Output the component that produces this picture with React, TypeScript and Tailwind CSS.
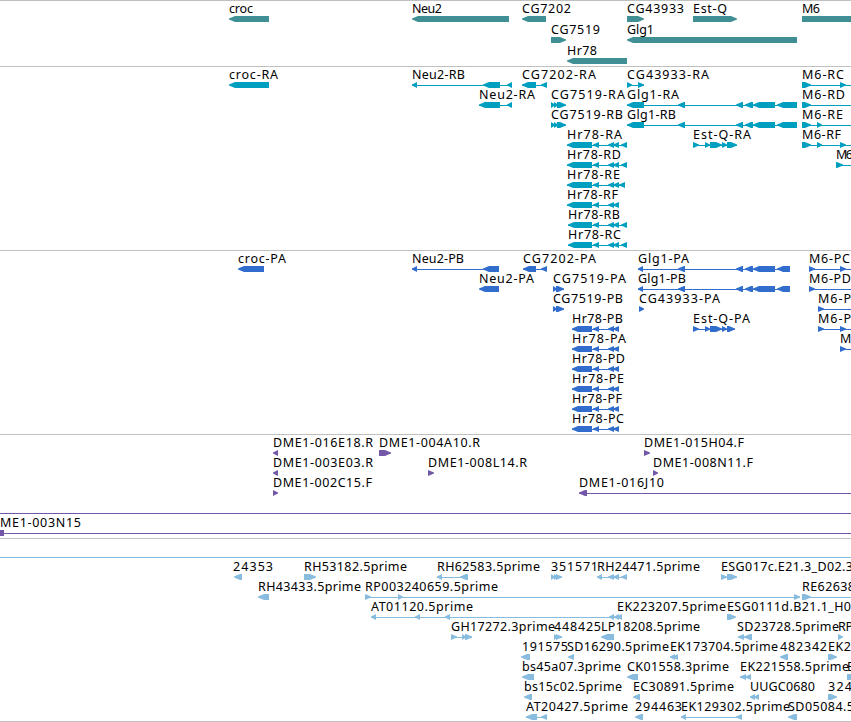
type Strand = "+" | "-" | "none";
type Block = [number, number];

interface Feature {
  name?: string;
  x: number;
  end?: number; // right edge of the label
  row: number;
  strand: Strand;
  blocks: Block[];
  line?: Block;
}

// name, label start, label end, row, strand, blocks, optional connector
function f(
  name: string,
  x: number,
  end: number,
  row: number,
  strand: Strand,
  blocks: Block[],
  line?: Block
): Feature {
  return { name, x, end, row, strand, blocks, line };
}

const EDGE = 851;

const GENES: Feature[] = [
  f("croc", 229, 253, 0, "-", [[229, 269]]),
  f("Neu2", 412, 442, 0, "-", [[412, 509]]),
  f("CG7202", 522, 571, 0, "-", [[522, 546]]),
  f("CG7519", 551, 600, 1, "+", [[551, 566]]),
  f("Hr78", 567, 597, 2, "-", [[567, 627]]),
  f("CG43933", 627, 684, 0, "+", [[627, 644]]),
  f("Est-Q", 693, 727, 0, "+", [[693, 737]]),
  f("Glg1", 627, 654, 1, "-", [[627, 797]]),
  f("M6", 802, 820, 0, "+", [[802, 900]]),
];

const GLG1_R: Block[] = [[627, 644], [678, 685], [736, 743], [745, 753], [753, 775], [777, 797]];
const CG7519_R: Block[] = [[551, 555], [554, 558], [557, 566]];
const HR78_R: Block[] = [[567, 592], [593, 599], [608, 614], [613, 619]];
const HR78_R2: Block[] = [[568, 592], [593, 599], [608, 614], [613, 619], [621, 627]];

const TRANSCRIPTS: Feature[] = [
  f("croc-RA", 229, 278, 0, "-", [[229, 269]]),
  f("Neu2-RB", 412, 465, 0, "-", [[412, 417], [483, 500], [507, 512]]),
  f("Neu2-RA", 479, 535, 1, "-", [[479, 500], [507, 512]]),
  f("CG7202-RA", 522, 596, 0, "-", [[522, 536], [541, 547]]),
  f("CG7519-RA", 551, 625, 1, "+", CG7519_R),
  f("CG7519-RB", 551, 623, 2, "+", CG7519_R),
  f("CG43933-RA", 627, 709, 0, "+", [[627, 632], [638, 644]]),
  f("Glg1-RA", 627, 679, 1, "-", GLG1_R),
  f("Glg1-RB", 627, 676, 2, "-", GLG1_R),
  f("Est-Q-RA", 693, 751, 3, "+", [[693, 699], [705, 710], [710, 722], [722, 727], [727, 737]]),
  f("Hr78-RA", 567, 622, 3, "-", [...HR78_R, [621, 627]]),
  f("Hr78-RD", 567, 621, 4, "-", [...HR78_R, [621, 627]]),
  f("Hr78-RE", 567, 620, 5, "-", [...HR78_R, [619, 625]]),
  f("Hr78-RF", 567, 618, 6, "-", HR78_R),
  f("Hr78-RB", 568, 620, 7, "-", HR78_R2),
  f("Hr78-RC", 568, 621, 8, "-", HR78_R2),
  f("M6-RC", 802, 844, 0, "+", [[802, 811], [840, 846]], [802, EDGE]),
  f("M6-RD", 802, 845, 1, "+", [[802, 811]], [802, EDGE]),
  f("M6-RE", 802, 843, 2, "+", [[802, 811], [817, 822]], [802, EDGE]),
  f("M6-RF", 802, 841, 3, "+", [[802, 811], [817, 822], [840, 846]], [802, EDGE]),
  f("M6", 836, 853, 4, "+", [[836, 843]], [836, EDGE]),
];

const GLG1_P: Block[] = [[638, 643], [678, 685], [736, 743], [745, 753], [753, 775], [777, 790]];
const CG7519_P: Block[] = [[553, 557], [556, 564]];
const HR78_P: Block[] = [[572, 592], [593, 599], [608, 614], [613, 619]];

const PROTEINS: Feature[] = [
  f("croc-PA", 238, 286, 0, "-", [[238, 264]]),
  f("Neu2-PB", 412, 464, 0, "-", [[412, 417], [483, 499]]),
  f("Neu2-PA", 479, 534, 1, "-", [[479, 499]]),
  f("CG7202-PA", 523, 596, 0, "-", [[523, 536], [541, 547]]),
  f("CG7519-PA", 553, 626, 1, "+", CG7519_P),
  f("CG7519-PB", 553, 623, 2, "+", CG7519_P),
  f("Glg1-PA", 638, 689, 0, "-", GLG1_P),
  f("Glg1-PB", 638, 686, 1, "-", GLG1_P),
  f("CG43933-PA", 639, 720, 2, "+", [[639, 644]]),
  f("Est-Q-PA", 693, 750, 3, "+", [[693, 699], [705, 710], [710, 722], [722, 727], [727, 735]]),
  f("Hr78-PB", 572, 623, 3, "-", HR78_P),
  f("Hr78-PA", 572, 626, 4, "-", HR78_P),
  f("Hr78-PD", 572, 625, 5, "-", HR78_P),
  f("Hr78-PE", 572, 624, 6, "-", HR78_P),
  f("Hr78-PF", 572, 622, 7, "-", HR78_P),
  f("Hr78-PC", 572, 624, 8, "-", HR78_P),
  f("M6-PC", 809, 850, 0, "+", [[809, 815], [840, 846]], [809, EDGE]),
  f("M6-PD", 809, 851, 1, "+", [[809, 815]], [809, EDGE]),
  f("M6-P", 818, 851, 2, "+", [[818, 824]], [818, EDGE]),
  f("M6-P", 818, 851, 3, "+", [[818, 824], [840, 846]], [818, EDGE]),
  f("M", 840, 850, 4, "+", [[840, 846]], [840, EDGE]),
];

const BACS: Feature[] = [
  f("DME1-016E18.R", 273, 373, 0, "-", [[273, 278]]),
  f("DME1-003E03.R", 273, 373, 1, "-", [[273, 278]]),
  f("DME1-002C15.F", 273, 372, 2, "+", [[273, 278]]),
  f("DME1-004A10.R", 379, 480, 0, "+", [[379, 391]]),
  f("DME1-008L14.R", 428, 527, 1, "+", [[428, 434]]),
  f("DME1-015H04.F", 644, 744, 0, "+", [[644, 650]]),
  f("DME1-008N11.F", 653, 753, 1, "+", [[653, 658]]),
  f("DME1-016J10", 579, 664, 2, "-", [[579, 587]], [579, EDGE]),
  { x: 0, row: 3, strand: "none", blocks: [], line: [0, EDGE] },
  f("ME1-003N15", 0, 81, 4, "none", [[0, 4]], [0, EDGE]),
];

const ESTS: Feature[] = [
  { x: 0, row: 0, strand: "none", blocks: [], line: [0, EDGE] },
  f("24353", 233, 273, 1, "-", [[234, 242]]),
  f("RH53182.5prime", 304, 407, 1, "+", [[304, 316]]),
  f("RH62583.5prime", 437, 540, 1, "-", [[437, 442], [460, 468]]),
  f("351571", 551, 598, 1, "+", [[551, 555], [554, 558], [556, 562]]),
  f("RH24471.5prime", 597, 700, 1, "-", [[597, 602], [608, 614], [613, 619], [621, 627]]),
  f("ESG017c.E21.3_D02.3", 721, 853, 1, "+", [[721, 727], [727, 737]]),
  f("RH43433.5prime", 258, 361, 2, "-", [[258, 269]]),
  f("RP003240659.5prime", 365, 498, 2, "+", [[365, 371], [398, 403], [794, 800]]),
  f("RE62638", 802, 855, 2, "+", [[802, 811]], [802, EDGE]),
  f("AT01120.5prime", 371, 473, 3, "-", [[371, 376], [415, 420], [445, 450], [609, 614], [614, 619]]),
  f("EK223207.5prime", 617, 726, 3, "-", [[617, 622]]),
  f("ESG0111d.B21.1_H0", 727, 851, 3, "+", [[727, 736]]),
  f("GH17272.3prime", 451, 555, 4, "+", [[451, 457], [462, 466], [465, 472]]),
  f("448425", 554, 601, 4, "+", [[554, 558], [556, 562]]),
  f("LP18208.5prime", 601, 700, 4, "-", [[601, 614]]),
  f("SD23728.5prime", 737, 839, 4, "-", [[738, 744], [744, 752]]),
  f("RP", 838, 853, 4, "+", [[838, 843]]),
  f("191575", 522, 568, 5, "-", [[521, 530]]),
  f("SD16290.5prime", 567, 669, 5, "-", [[568, 574]]),
  f("EK173704.5prime", 670, 778, 5, "-", [[670, 675], [673, 678]]),
  f("482342", 780, 827, 5, "-", [[780, 788]]),
  f("EK2", 828, 851, 5, "+", [[828, 837]]),
  f("bs45a07.3prime", 522, 621, 6, "-", [[522, 534]]),
  f("CK01558.3prime", 627, 729, 6, "-", [[627, 638]]),
  f("EK221558.5prime", 740, 849, 6, "-", [[740, 746], [745, 751]]),
  f("E", 847, 854, 6, "+", [[847, 860]]),
  f("bs15c02.5prime", 524, 622, 7, "-", [[524, 532]]),
  f("EC30891.5prime", 633, 734, 7, "-", [[633, 640]]),
  f("UUGC0680", 750, 815, 7, "-", [[750, 755], [754, 759]]),
  f("324", 828, 852, 7, "+", [[828, 837]]),
  f("AT20427.5prime", 526, 628, 8, "-", [[526, 537], [541, 547]]),
  f("294463", 635, 682, 8, "-", [[635, 643]]),
  f("EK129302.5prime", 681, 790, 8, "-", [[681, 686], [736, 742]]),
  f("SD05084.5", 788, 854, 8, "-", [[788, 797]]),
];

function blockPoints([a, b]: Block, y: number, strand: Strand) {
  const tip = Math.min(6, b - a);
  if (strand === "-") {
    return `${a},${y + 2.5} ${a + tip},${y} ${b},${y} ${b},${y + 6} ${a + tip},${y + 6} ${a},${y + 3.5}`;
  }
  if (strand === "+") {
    return `${a},${y} ${b - tip},${y} ${b},${y + 2.5} ${b},${y + 3.5} ${b - tip},${y + 6} ${a},${y + 6}`;
  }
  return `${a},${y} ${b},${y} ${b},${y + 6} ${a},${y + 6}`;
}

function FeatureGlyph({ feature, pitch }: { feature: Feature; pitch: number }) {
  const { name, x, end, row, strand, blocks, line } = feature;
  const y = 15 + row * pitch;
  const last = blocks[blocks.length - 1];
  const span = line ?? (blocks.length > 1 ? [blocks[0][0], last[1]] : null);

  return (
    <g>
      {span && <rect x={span[0]} y={y + 3} width={span[1] - span[0]} height={1} shapeRendering="crispEdges" />}
      {blocks.map((b, i) => (
        <polygon key={i} points={blockPoints(b, y, strand)} />
      ))}
      {name && end && (
        <text x={x} y={y - 3} textLength={end - x} className="fill-black">
          {name}
        </text>
      )}
    </g>
  );
}

function Track({
  features,
  className,
  pitch = 20,
}: {
  features: Feature[];
  className: string;
  pitch?: number;
}) {
  return (
    <section className={`w-full border-t border-[#c0c0c0] ${className}`}>
      <svg className="block h-full w-[851px] overflow-hidden font-['Noto_Sans',sans-serif] text-[12.5px]">
        {features.map((feature, i) => (
          <FeatureGlyph key={i} feature={feature} pitch={pitch} />
        ))}
      </svg>
    </section>
  );
}

export default function App() {
  return (
    <main className="flex h-[722px] w-[851px] flex-col overflow-hidden bg-white">
      <Track features={GENES} pitch={21} className="h-[66px] fill-[#408f94]" />
      <Track features={TRANSCRIPTS} className="h-[184px] fill-[#009fc0]" />
      <Track features={PROTEINS} className="h-[184px] fill-[#316dcc]" />
      <Track features={BACS} className="h-[104px] fill-[#7458a8]" />
      <Track features={ESTS} className="h-[183px] fill-[#88bcde]" />
      <div className="h-px w-full bg-[#c0c0c0]" />
    </main>
  );
}
